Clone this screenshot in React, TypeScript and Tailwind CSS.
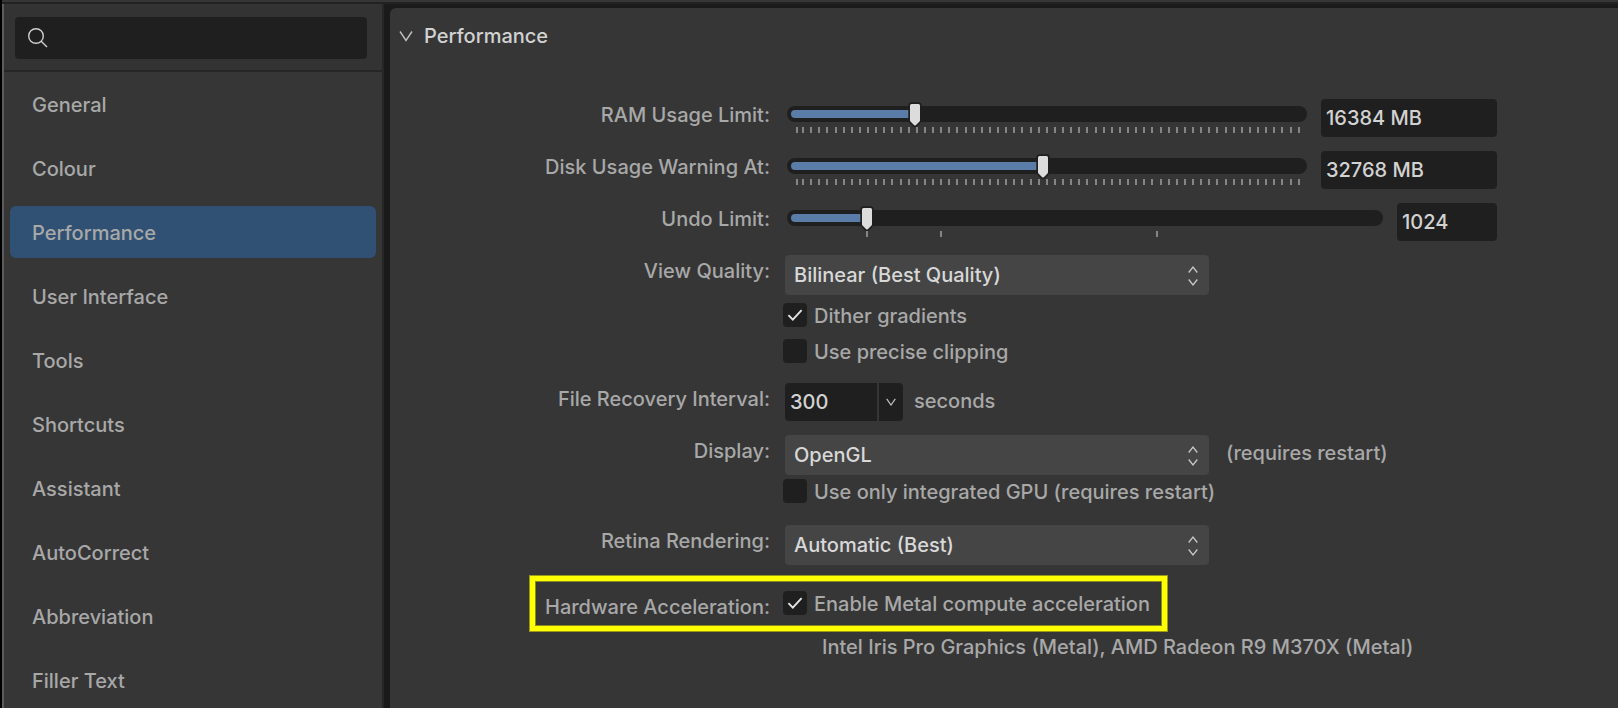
import { useState } from "react";
import type { ReactNode } from "react";

const SECTIONS = [
  "General",
  "Colour",
  "Performance",
  "User Interface",
  "Tools",
  "Shortcuts",
  "Assistant",
  "AutoCorrect",
  "Abbreviation",
  "Filler Text",
];

const UNDO_TICKS = [12.1, 24.9, 62.3];

type RowProps = { label: string; htmlFor: string; className: string; children: ReactNode };

const Row = ({ label, htmlFor, className, children }: RowProps) => {
  return (
    <div className={`flex items-start gap-[15px] ${className}`}>
      <label htmlFor={htmlFor} className="w-[380px] shrink-0 text-right leading-8">
        {label}
      </label>
      {children}
    </div>
  );
};

const EvenTicks = () => {
  return (
    <div className="ml-[9px] mr-[7px] flex gap-1">
      <span className="h-[6px] w-[2px] bg-[#858585]" />
      <div className="flex flex-1 justify-between">
        {Array.from({ length: 62 }, (_, idx) => (
          <span key={idx} className="h-[6px] w-[2px] bg-[#858585]" />
        ))}
      </div>
    </div>
  );
};

const UndoTicks = () => {
  return (
    <div className="relative ml-[10px] mr-2 h-[6px]">
      {UNDO_TICKS.map((tick) => (
        <span
          key={tick}
          className="absolute top-0 h-[6px] w-[2px] -translate-x-1/2 bg-[#858585]"
          style={{ left: `${tick}%` }}
        />
      ))}
    </div>
  );
};

type SliderProps = { id: string; initial: number; ticks: ReactNode };

const Slider = ({ id, initial, ticks }: SliderProps) => {
  const [value, setValue] = useState(initial);

  return (
    <div className="ml-[2px] mt-[7px] flex-1">
      <div className="relative h-4 rounded-full bg-[#1f1f1f] pl-[10px] pr-2">
        <div className="absolute left-1 top-1 h-2 w-4 rounded-l-full bg-[#5a7da7]" />
        <div className="relative h-full">
          <div className="absolute left-0 top-1 h-2 bg-[#5a7da7]" style={{ width: `${value}%` }} />
          <svg
            className="absolute -top-[5px] -translate-x-1/2"
            style={{ left: `${value}%` }}
            width="14"
            height="28"
            viewBox="0 0 14 28"
          >
            <path
              d="M3.5 3h7A1.5 1.5 0 0 1 12 4.5v14.7c0 .5-.2.9-.5 1.2L8 24.1a1.4 1.4 0 0 1-2 0l-3.5-3.7c-.3-.3-.5-.7-.5-1.2V4.5A1.5 1.5 0 0 1 3.5 3z"
              fill="#dcdcdc"
              stroke="#1f1f1f"
              strokeWidth="3.4"
              paintOrder="stroke"
            />
          </svg>
        </div>
        <input
          id={id}
          type="range"
          min={0}
          max={100}
          step={0.1}
          value={value}
          onChange={(e) => setValue(Number(e.target.value))}
          className="absolute inset-0 h-full w-full cursor-pointer opacity-0"
        />
      </div>
      <div className="mt-[5px]">{ticks}</div>
    </div>
  );
};

const Field = ({ label, value, className }: { label: string; value: string; className: string }) => {
  return (
    <input
      type="text"
      aria-label={label}
      defaultValue={value}
      className={`h-[38px] bg-[#1f1f1f] px-[5px] text-[#d2d2d2] outline-none ${className}`}
    />
  );
};

const Select = ({ id, options }: { id: string; options: string[] }) => {
  return (
    <div className="relative w-[424px]">
      <select
        id={id}
        className="h-10 w-full appearance-none rounded bg-[#454545] pl-[9px] pr-8 text-[#d8d8d8] outline-none"
      >
        {options.map((option) => (
          <option key={option}>{option}</option>
        ))}
      </select>
      <svg
        className="pointer-events-none absolute right-[11px] top-[10px]"
        width="10"
        height="22"
        viewBox="0 0 10 22"
        fill="none"
        stroke="#c8c8c8"
        strokeWidth="1.3"
      >
        <path d="M.7 7.5 5 2l4.3 5.5M.7 14.5 5 20l4.3-5.5" />
      </svg>
    </div>
  );
};

const Checkbox = ({ label, initial }: { label: string; initial: boolean }) => {
  const [checked, setChecked] = useState(initial);

  return (
    <label className="flex h-6 w-fit gap-[7px] leading-[26px]">
      <span className="relative h-6 w-6">
        <input
          type="checkbox"
          checked={checked}
          onChange={() => setChecked(!checked)}
          className="block h-6 w-6 appearance-none rounded bg-[#1f1f1f]"
        />
        {checked && (
          <svg
            className="pointer-events-none absolute inset-0"
            width="24"
            height="24"
            viewBox="0 0 24 24"
            fill="none"
            stroke="#e4e4e4"
            strokeWidth="1.9"
          >
            <path d="M5.4 12.2 9.8 16.6 18.6 7.2" />
          </svg>
        )}
      </span>
      {label}
    </label>
  );
};

const Sidebar = () => {
  const [active, setActive] = useState("Performance");

  return (
    <aside className="w-[380px] shrink-0 border-r-2 border-[#262626] bg-[#363636]">
      <div className="border-b-2 border-[#262626] bg-[#333333] pb-[11px] pl-[11px] pr-[15px] pt-[13px]">
        <div className="flex h-[42px] items-center rounded bg-[#1f1f1f] pl-3">
          <svg width="22" height="22" viewBox="0 0 22 22" fill="none" stroke="#cfcfcf" strokeWidth="1.4">
            <circle cx="9" cy="9" r="7.3" />
            <path d="m14.2 14.2 5.8 5.8" />
          </svg>
          <input
            type="search"
            aria-label="Search"
            className="ml-2 min-w-0 flex-1 bg-transparent text-[#d2d2d2] outline-none"
          />
        </div>
      </div>
      <nav className="flex flex-col gap-3 px-[6px] pt-[6px]">
        {SECTIONS.map((section) => (
          <button
            key={section}
            onClick={() => setActive(section)}
            className={`h-[52px] rounded-md pl-[22px] pt-[2px] text-left ${section === active ? "bg-[#305173]" : ""}`}
          >
            {section}
          </button>
        ))}
      </nav>
    </aside>
  );
};

export default function App() {
  return (
    <div className="flex min-h-screen flex-col border-l-2 border-black bg-[#363636] font-[Inter,sans-serif] text-[20px] font-medium text-[#a8a8a8]">
      <div className="h-1 border-b-2 border-[#222222]" />
      <div className="flex flex-1 border-l-2 border-[#5c5c5c]">
        <Sidebar />
        <main className="flex flex-1 bg-[#1a1a1a] pl-[6px] pt-1">
          <section className="flex-1 rounded-tl-md bg-[#363636]">
            <h1>
              <button className="flex h-14 items-center gap-[10px] pl-2 text-[#d2d2d2]">
                <svg width="16" height="14" viewBox="0 0 16 14" fill="none" stroke="#c0c0c0" strokeWidth="1.4">
                  <path d="M2 2.5 8 11.5 14 2.5" />
                </svg>
                Performance
              </button>
            </h1>

            <div className="pr-[121px] pt-[35px]">
              <Row label="RAM Usage Limit:" htmlFor="ram" className="h-[38px]">
                <div className="flex flex-1 gap-[14px]">
                  <Slider id="ram" initial={23.5} ticks={<EvenTicks />} />
                  <Field label="RAM usage" value="16384 MB" className="w-44 rounded" />
                </div>
              </Row>
              <Row label="Disk Usage Warning At:" htmlFor="disk" className="mt-[14px] h-[38px]">
                <div className="flex flex-1 gap-[14px]">
                  <Slider id="disk" initial={49} ticks={<EvenTicks />} />
                  <Field label="Disk usage" value="32768 MB" className="w-44 rounded" />
                </div>
              </Row>
              <Row label="Undo Limit:" htmlFor="undo" className="mt-[14px] h-[38px]">
                <div className="flex flex-1 gap-[14px]">
                  <Slider id="undo" initial={12.1} ticks={<UndoTicks />} />
                  <Field label="Undo steps" value="1024" className="w-[100px] rounded" />
                </div>
              </Row>

              <Row label="View Quality:" htmlFor="quality" className="mt-[14px]">
                <Select id="quality" options={["Bilinear (Best Quality)", "Nearest Neighbour (Fastest)"]} />
              </Row>
              <div className="ml-[393px] mt-2 flex flex-col gap-3">
                <Checkbox label="Dither gradients" initial={true} />
                <Checkbox label="Use precise clipping" initial={false} />
              </div>

              <Row label="File Recovery Interval:" htmlFor="interval" className="mt-5">
                <div className="flex">
                  <input
                    id="interval"
                    type="text"
                    defaultValue="300"
                    className="h-[38px] w-[92px] rounded-l bg-[#1f1f1f] px-[5px] text-[#d2d2d2] outline-none"
                  />
                  <button
                    aria-label="Choose interval"
                    className="ml-[2px] flex h-[38px] w-6 items-center justify-center rounded-r bg-[#1f1f1f]"
                  >
                    <svg width="10" height="8" viewBox="0 0 10 8" fill="none" stroke="#c0c0c0" strokeWidth="1.2">
                      <path d="M.7.8 5 7l4.3-6.2" />
                    </svg>
                  </button>
                  <span className="ml-[11px] leading-9">seconds</span>
                </div>
              </Row>

              <Row label="Display:" htmlFor="display" className="mt-[14px]">
                <div className="flex">
                  <Select id="display" options={["OpenGL", "Metal"]} />
                  <span className="ml-[17px] leading-9">(requires restart)</span>
                </div>
              </Row>
              <div className="ml-[393px] mt-1">
                <Checkbox label="Use only integrated GPU (requires restart)" initial={false} />
              </div>

              <Row label="Retina Rendering:" htmlFor="retina" className="mt-[22px]">
                <Select id="retina" options={["Automatic (Best)", "Low Quality (Fastest)"]} />
              </Row>

              <div
                role="group"
                aria-labelledby="hardware"
                className="ml-[140px] mt-[11px] flex h-[55px] w-fit gap-[13px] border-[5px] border-[#ffff00] pr-3 pt-[10px] shadow-[0_0_0_1px_#9a9a1a,inset_0_0_0_1px_#8a8a20]"
              >
                <span id="hardware" className="w-[235px] text-right leading-8">
                  Hardware Acceleration:
                </span>
                <Checkbox label="Enable Metal compute acceleration" initial={true} />
              </div>
              <p className="ml-[432px] leading-8">Intel Iris Pro Graphics (Metal), AMD Radeon R9 M370X (Metal)</p>
            </div>
          </section>
        </main>
      </div>
    </div>
  );
}
